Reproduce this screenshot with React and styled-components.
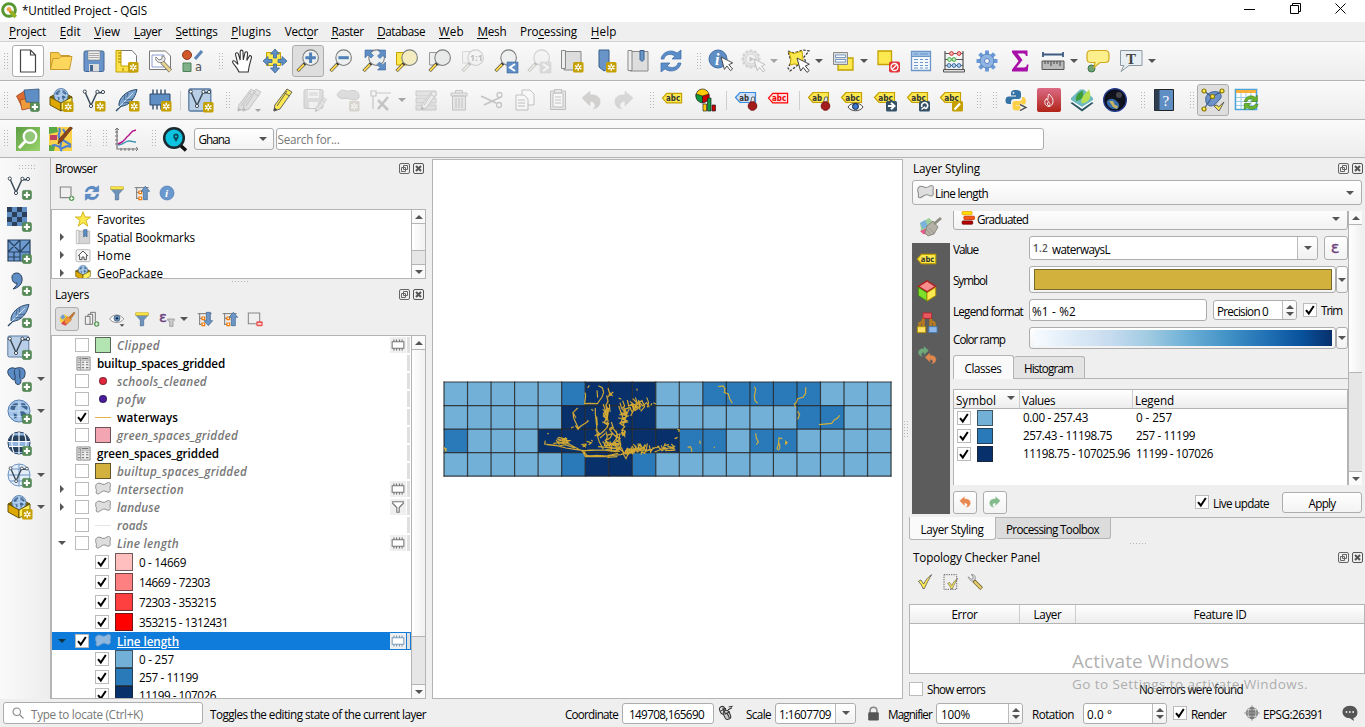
import React, { useLayoutEffect, useRef, useState } from 'react';
import styled, { createGlobalStyle, css } from 'styled-components';

const FONT = '"Open Sans", "Noto Sans", sans-serif';
const LINE = '#b4b4b4';

const Global = createGlobalStyle`
  *, *::before, *::after { box-sizing: border-box; }
  body { margin: 0; overflow: hidden; background: #efefef; font: 11.7px/16px ${FONT}; color: #000; }
`;

/* ---------- text ---------- */

const Label = styled.span`
  display: block;
  flex: none;
  white-space: nowrap;
  width: ${p => (p.$w ? `${p.$w}px` : 'auto')};
  margin-left: ${p => p.$ml || 0}px;
  margin-top: ${p => p.$mt || 0}px;
  color: ${p => p.$color || 'inherit'};
  font-size: ${p => p.$size || 11.7}px;
  font-weight: ${p => (p.$bold ? 600 : 400)};
  font-style: ${p => (p.$italic ? 'italic' : 'normal')};
  text-decoration: ${p => (p.$underline ? 'underline' : 'none')};
  text-underline-offset: 1px;
`;

const Mnemonic = styled.span`
  border-bottom: 1px solid currentColor;
  display: inline-block;
  line-height: 13px;
`;

/* Tracks its characters so that the label takes exactly `w` pixels. */
function T({ w, children, ...rest }) {
  const ref = useRef(null);
  const [spacing, setSpacing] = useState(0);
  const text = String(children);
  const at = text.indexOf('&');
  const plain = text.replace('&', '');
  useLayoutEffect(() => {
    if (!w || !ref.current) return;
    const range = document.createRange();
    range.selectNodeContents(ref.current);
    setSpacing((w - range.getBoundingClientRect().width) / plain.length);
  }, []);
  return (
    <Label ref={ref} $w={w} style={{ letterSpacing: spacing }} {...rest}>
      {at < 0 ? plain : <>{plain.slice(0, at)}<Mnemonic>{plain[at]}</Mnemonic>{plain.slice(at + 1)}</>}
    </Label>
  );
}

/* ---------- icons ---------- */

const Glyph = styled.svg.attrs({ viewBox: '0 0 24 24' })`
  width: ${p => p.$s || 24}px;
  height: ${p => p.$s || 24}px;
  flex: none;
  display: block;
  overflow: visible;
  ${p => p.$off && css`opacity: 0.32; filter: grayscale(0.85);`}
`;

const StarBadge = ({ x = 13, y = 13 }) => (
  <g transform={`translate(${x} ${y})`}>
    <rect width="10.5" height="10.5" rx="1.6" fill="#c4a000" stroke="none" />
    <path d="M5.25 1.8v7M2 3.6l6.5 3.5M2 7.1l6.5-3.5" stroke="#fff" strokeWidth="1.5" />
    <circle cx="5.25" cy="5.3" r="1" fill="#c4a000" stroke="none" />
  </g>
);
const PlusBadge = ({ x = 14, y = 14 }) => (
  <g transform={`translate(${x} ${y})`}>
    <rect x=".4" y=".4" width="9" height="9" rx="1.6" fill="#5a8c5a" stroke="#3f7a46" strokeWidth=".6" />
    <path d="M4.9 1.8v6.2M1.8 4.9H8" stroke="#fff" strokeWidth="2" />
  </g>
);
const Lens = ({ fill = '#eef0f0', children }) => (
  <>
    <path d="M9.3 14.2L1.6 22" stroke="#333" strokeWidth="3.2" />
    <path d="M8 15.5L1.9 21.7" stroke="#fcd94f" strokeWidth="2" />
    <circle cx="14.6" cy="8.7" r="7.8" fill={fill} stroke="#7d7d7d" strokeWidth="1.1" />
    {children}
  </>
);
const Tag = ({ fill = '#fce94f', stroke = '#c4a000', color = '#333', label = 'abc', y = 0 }) => (
  <g transform={`translate(0 ${y})`}>
    <path d="M1.5 9.5L6 4.5h15.5v10H6z" fill={fill} stroke={stroke} strokeWidth="1.2" />
    <text x="5.3" y="12.6" fontSize="8.6" fontWeight="700" fontFamily="DejaVu Sans, sans-serif" fill={color} textLength={label.length * 4.9} lengthAdjust="spacingAndGlyphs">{label}</text>
  </g>
);
const Cursor = ({ x = 11, y = 8, s = 1 }) => (
  <path transform={`translate(${x} ${y}) scale(${s})`} d="M0 0l3.6 13 2.6-3.6 3.8 5 2.2-1.8-3.9-4.6 4-1.8z" fill="#fff" stroke="#444" />
);
const VLine = ({ s = '#3d4a57' }) => (
  <g fill="none" stroke={s} strokeWidth="1.5">
    <path d="M3 4l6 13.5 6-13 5 .3" />
    <g fill="#fff" strokeWidth="1"><circle cx="2.8" cy="3.6" r="1.6" /><circle cx="9" cy="18" r="1.6" /><circle cx="15.4" cy="3.8" r="1.6" /><circle cx="21" cy="4" r="1.6" /></g>
  </g>
);
const Globe = ({ cx = 12, cy = 12, r = 10 }) => (
  <g>
    <circle cx={cx} cy={cy} r={r} fill="#a3c4e8" stroke="#5a7fae" />
    <g transform={`translate(${cx} ${cy}) scale(${r / 10})`} fill="#3f6690">
      <path d="M-7-5l3-2 3 0 0 2-2 1-1 3-2 0-2-1zM2-7l3 0 3 4-1 2-3-2-2-1zM1 0l3 0 3 3-2 1-2 4-1-3zM-5 2l3 1 0 3-2 1z" />
      <path d="M-9.5 0h19M-8 5h16M-8-5h16M0-9.5v19" stroke="#d6e6f6" strokeWidth=".5" />
    </g>
  </g>
);
const GeoBox = ({ lower = true }) => (
  <g stroke="#5c4b00" strokeWidth=".9">
    <path d="M1 9l11-6 11 6-11 5z" fill="#7a6300" />
    <g stroke="none"><Globe cx={12} cy={7.5} r={7} /></g>
    <path d="M1 9l11 6v8L1 17z" fill="#dda900" />
    <path d="M23 9l-11 6v8l11-6z" fill={lower ? '#ffef5c' : '#e8c600'} />
  </g>
);
const Feather = () => (
  <g>
    <path d="M1 23L20 4" stroke="#2c4c6b" strokeWidth="1.4" />
    <path d="M4 18C3 10 12 2 22 1.500 20 10 15 18 4.500 18.500z" fill="#7ba2cf" stroke="#2c4c6b" />
    <path d="M3 20L18 5" stroke="#dbe8f5" strokeWidth=".9" />
    <path d="M9 12l1-5M12 9l1-4M11 12l7-1M8 15l7-1" stroke="#2c4c6b" strokeWidth=".7" fill="none" />
  </g>
);
const Pencil = ({ fill = '#fce94f' }) => (
  <g stroke="#555" strokeWidth=".9" strokeLinejoin="round">
    <path d="M17 1l5 3L10 21l-6 2 .8-6z" fill={fill} />
    <path d="M14.500 5l5 3M17 3L7 18" fill="none" /><path d="M4 23l.5-3 2.300 1.700z" fill="#444" />
  </g>
);
const Refresh = () => (
  <g fill="#5b8dc9" stroke="#3f6ea8" strokeWidth=".7">
    <path d="M2 10C3 3 12-.5 18 4l4-3v9h-9l3-3C11 4 6 5.500 5 10z" />
    <path d="M22 14c-1 7-10 10.500-16 6l-4 3v-9h9l-3 3c5 3 10 1.500 11-3z" />
  </g>
);
const Funnel = () => (
  <g><path d="M3 4h18v2.500l-6.500 7V22l-5 .500v-9L3 6.500z" fill="#6e93bd" stroke="#456a94" /><path d="M2.500 2.500h19v4h-19z" fill="#fce94f" stroke="#c4a000" strokeWidth=".8" /></g>
);
const TreeArrow = ({ up }) => (
  <g>
    <path d="M1 4h21M4 4v17M4 11h5M4 20h5" stroke="#777" fill="none" strokeWidth="1.500" />
    <path d="M7.500 9h4v4h-4zM7.500 18h4v4h-4z" fill="#fff" stroke="#f57900" strokeWidth="1.800" />
    <path transform={up ? '' : 'rotate(180 17 12)'} d="M17 2l6.500 7.500H20V22h-6V9.500h-3.500z" fill="#6e97c7" stroke="#37608c" />
  </g>
);
const Chip = ({ c = '#777', fill = '#fff' }) => (
  <g stroke={c}><path d="M2 6.500h20v11H2z" fill={fill} strokeWidth="1.800" /><path d="M5 6.500V2.500M9.500 6.500V2.500M14.500 6.500V2.500M19 6.500V2.500M5 17.500v4M9.500 17.500v4M14.500 17.500v4M19 17.500v4" strokeWidth="2" /></g>
);
const Poly = ({ fill = '#dedede', stroke = '#8c8c8c' }) => (
  <path d="M1 8c0-4 4-6 8-4s6 1 9-1 6 0 5 4 0 5 0 7-3 4-6 2-5-1-8 1-6 4-7 1 1-3 0-5-1-2-1-5z" fill={fill} stroke={stroke} strokeWidth="1.500" />
);
const Undo = ({ fill = '#c9653b', flip }) => (
  <path transform={flip ? 'translate(24 0) scale(-1 1)' : ''} d="M3 10l8-7v4c7-1 11 3 10 8-1 4-3 5-7 6 2-2 3-4 1-6-1-1-2-2-4-1v4z" fill={fill} stroke={fill} strokeWidth=".6" opacity=".95" />
);
const Check = () => <path d="M2 11l4-2 4 6C13 9 17 4 22 1 18 7 14 15 11 22H9C8 18 5 14 2 11z" fill="#fce94f" stroke="#555" strokeWidth="1.200" />;

const ICONS = {
  newFile: <path d="M4.500 1h10l5 5v17h-15zM14.500 1v5h5" fill="#fff" stroke="#444" strokeWidth="1.200" />,
  open: <g fill="#f7c948" stroke="#c99a2e"><path d="M1.500 20V3.500h8l2 3h9V20z" /><path d="M1.500 20.500L4 9.500h6l2-2h11l-2.500 13z" fill="#fdd65c" /></g>,
  save: <g><rect x="2" y="2" width="20" height="20.500" rx="1.500" fill="#6894cb" stroke="#44668f" /><path d="M6 2h12v9H6z" fill="#eee" stroke="#777" strokeWidth=".6" /><path d="M7 4.500h10M7 6.500h10M7 8.500h10" stroke="#999" strokeWidth=".8" /><path d="M7 15h10v7.500H7z" fill="#ddd" /><path d="M8 16h3v6H8z" fill="#44668f" /></g>,
  layout: <g><path d="M5 1.500h12l4.500 5V21H5z" fill="#fff" stroke="#777" /><path d="M1 1.500h5V17h14v6H1z" fill="#fce24a" stroke="#c4a000" /><path d="M3 4h3M3 7h3M3 10h3M3 13h3M8 19v3" stroke="#9b7d00" /><StarBadge /></g>,
  layoutMgr: <g><path d="M1.500 2h16l5 5v13.500h-21z" fill="#fff" stroke="#777" /><path d="M4 6h12v12H4z" fill="none" stroke="#6d87c5" strokeWidth=".8" /><path d="M14 13l8.500 9" stroke="#777" strokeWidth="4.500" /><path d="M14 13l8.300 8.700" stroke="#e8d48c" strokeWidth="2.800" /><path d="M8 8l3 3 3-1 0-3c3 0 4 3 2 5s-4 2-6 1-3-3-2-5z" fill="#eee" stroke="#777" strokeWidth=".9" /></g>,
  styleMgr: <g><circle cx="6" cy="6" r="4.500" fill="#d0582b" stroke="#8c3b1d" /><path d="M14 10l7-8" stroke="#5c86b8" strokeWidth="3.200" /><path d="M2 14h8v8.500H2z" fill="#7fb08a" stroke="#4c8259" /><text x="14" y="22" fontSize="11.5" fontFamily="DejaVu Sans, sans-serif" fill="#555">a</text></g>,
  pan: <path d="M9 23c-1.500-4-5-7-6.300-9.500-.600-2 1.600-2.500 3-.5L8 15.500 5.500 5.500c-.3-2 2.200-2.500 2.800-.6L10.200 11V2.800c0-2.200 2.600-2.200 2.800 0L13.300 11l1.600-7c.5-2 2.900-1.400 2.700.7L16.800 11.500 19 7.500c.7-1.700 3-.8 2.500.9l-2.300 8.600-1 6z" fill="#fff" stroke="#333" strokeWidth="1.100" />,
  panSel: <g><path d="M3.500 3.500h14v13h-14z" fill="#fce94f" stroke="#c4a000" /><g fill="#5f8ec4" stroke="#3a659b" strokeWidth=".8"><path d="M12 0l4.500 5h-3v4h-3V5h-3zM12 24l4.500-5h-3v-4h-3v4h-3zM0 12l5-4.500v3h4v3H5v3zM24 12l-5-4.500v3h-4v3h4v3z" /></g></g>,
  zoomIn: <Lens><path d="M14.600 3.500v10.400M9.400 8.700h10.400" stroke="#4f80b8" strokeWidth="3" /></Lens>,
  zoomOut: <Lens><path d="M9.400 8.700h10.400" stroke="#4f80b8" strokeWidth="3" /></Lens>,
  zoomFull: <g><Lens /><g fill="#5f8ec4" stroke="#3a659b" strokeWidth=".6"><path d="M3 1h8L8.500 3.500l3 3-2.500 2.500-3-3L3 9zM23.500 1v8L21 6.500l-3 3L15.500 7l3-3L16 1zM23.500 21h-8l2.500-2.500-3-3 2.500-2.500 3 3 3-3z" /></g></g>,
  zoomSel: <g><path d="M1.500 3.500h11V16h-11z" fill="#fce94f" stroke="#c4a000" /><Lens fill="#f2ecc0" /></g>,
  zoomLayer: <g><path d="M1.500 3.500h11V16h-11z" fill="#eee" stroke="#999" /><Lens fill="#e8eaea" /></g>,
  zoomNative: <g><path d="M1.500 2.500h11V14h-11z" fill="#eee" stroke="#999" /><Lens><text x="9" y="12" fontSize="9" fontWeight="700" fontFamily="Open Sans, sans-serif" fill="#444">1:1</text></Lens></g>,
  zoomLast: <g><Lens /><path d="M13 13h11v11H13z" fill="#5f8ec4" stroke="#3a659b" strokeWidth=".6" /><path d="M21 15l-5 3.500 5 3.500" fill="none" stroke="#fff" strokeWidth="2" /></g>,
  zoomNext: <g><Lens /><path d="M13 13h11v11H13z" fill="#aaa" stroke="#999" strokeWidth=".6" /><path d="M16 15l5 3.500-5 3.500" fill="none" stroke="#fff" strokeWidth="2" /></g>,
  newView: <g fill="#ddd" stroke="#888"><path d="M4 2.500h17v18.500H4z" /><path d="M1.500 1.500h4v18h-4z" fill="#eee" /><StarBadge /></g>,
  newMark: <g><path d="M6 1h10v18l-5 3-5-4z" fill="#6894c8" stroke="#3a5f8b" /><StarBadge /></g>,
  marks: <g fill="#ddd" stroke="#888"><path d="M4 2.500h18V22H4z" /><path d="M2 1.500h4v20H2z" fill="#eee" /><path d="M14 1.500h4v9l-2 2-2-2z" fill="#6894c8" stroke="#3a5f8b" /></g>,
  refresh: <Refresh />,
  identify: <g><circle cx="10" cy="10" r="9" fill="#5f8ec4" stroke="#3f6ea8" /><text x="7" y="15.500" fontSize="16" fontStyle="italic" fontWeight="700" fontFamily="Liberation Serif, serif" fill="#fff">i</text><Cursor x={13} y={8} s={0.95} /></g>,
  action: <g><g stroke="#999" strokeWidth="3">{[0, 30, 60, 90, 120, 150].map(a => <path key={a} d="M10 .5v19" transform={`rotate(${a} 10 10)`} />)}</g><circle cx="10" cy="10" r="7.500" fill="#ccc" stroke="#888" /><circle cx="10" cy="10" r="5" fill="#eee" stroke="#888" /><path d="M8.500 7.500l4.500 2.500-4.500 3z" fill="#666" /><Cursor x={13} y={10} s={0.9} /></g>,
  select: <g><path d="M2 2l6 2 9-3 6 1-5 6 3 9-9-1-8 6-2-3 3-6z" fill="none" stroke="#333" strokeDasharray="2.500 1.500" strokeWidth="1.200" /><path d="M3 3l5 1.500L16 2l1 8-1 6-8-1-4 1 1-6z" fill="#fce94f" stroke="#c4a000" /><Cursor x={11} y={9} s={1} /></g>,
  selectVal: <g><path d="M7 9h15v12H7z" fill="#fce94f" stroke="#c4a000" strokeWidth="1.300" /><path d="M2.500 3.500h14v12h-14z" fill="#ddd" stroke="#8a8a8a" /><path d="M4.500 6h10v2.500h-10zM4.500 10.500h10V13h-10z" fill="#fff" stroke="#5c86b8" strokeWidth=".8" /></g>,
  deselect: <g><path d="M2 2h13.500v13.500H2z" fill="#fce94f" stroke="#c4a000" strokeWidth="1.300" /><rect x="13" y="12.500" width="11" height="11" rx="2" fill="#e0353a" /><circle cx="18.500" cy="18" r="3.500" fill="none" stroke="#fff" strokeWidth="1.300" /><path d="M16 20.500l5-5" stroke="#fff" strokeWidth="1.300" /></g>,
  table: <g><path d="M2.500 2.500h19v19h-19z" fill="#f3f8fd" stroke="#6d96c8" strokeWidth="1.300" /><path d="M3 3h18v4.500H3z" fill="#9dbfe4" /><path d="M2.500 7.500h19M5 5h4M11 5h8M5 10.500h4M11 10.500h3M16 10.500h3M5 13.500h4M11 13.500h3M16 13.500h3M5 16.500h4M11 16.500h3M16 16.500h3M5 19h4M11 19h3M16 19h3" stroke="#6d96c8" strokeWidth="1.100" /></g>,
  abacus: <g fill="none" stroke="#555"><path d="M3 2v19M21 2v19M3 4.500h18M3 10.500h18M3 16.500h18" strokeWidth="1.200" /><path d="M1.500 20.500h21v2.500h-21z" fill="#ddd" /><g stroke="#c33" fill="#f6b4b4"><circle cx="9.500" cy="4.500" r="1.900" /><circle cx="17" cy="4.500" r="1.900" /></g><g stroke="#4a4" fill="#c8ecc8"><circle cx="7.500" cy="10.500" r="1.900" /><circle cx="12" cy="10.500" r="1.900" /></g><g stroke="#3a6ea5" fill="#b4d2ee"><circle cx="7" cy="16.500" r="1.900" /><circle cx="12" cy="16.500" r="1.900" /><circle cx="17" cy="16.500" r="1.900" /></g></g>,
  gear: <g><g stroke="#6b9ad4" strokeWidth="4">{[0, 45, 90, 135].map(a => <path key={a} d="M12 1.500v21" transform={`rotate(${a} 12 12)`} />)}</g><circle cx="12" cy="12" r="7" fill="#8fb4e3" stroke="#5585c2" /><circle cx="12" cy="12" r="2.500" fill="#f4f4f4" stroke="#5585c2" /></g>,
  sigma: <path d="M4 1.500h15.500V7h-1.500c-.5-2-1.500-2.500-3-2.500H9.500l5 6.500-6 7.500H16c2 0 2.500-1 3-3h1.500l-.8 7H4v-2l6.500-8.500L4 3.500z" fill="#a80fa8" />,
  ruler: <g><path d="M2 5.500h20M2 3v5M22 3v5" stroke="#3d5a80" strokeWidth="1.800" /><path d="M1 12h22v8.500H1z" fill="#bbb" stroke="#555" /><path d="M4 12v3M7 12v3M10 12v5M13 12v3M16 12v3M19 12v5" stroke="#444" /></g>,
  tips: <g><circle cx="5.500" cy="19.500" r="3.500" fill="#6da377" stroke="#3f7048" /><path d="M5 1.500h14c3 0 4 1.500 4 4v4c0 3-1 4-4 4h-5l-6 5 1-5H5c-3 0-4-1-4-4v-4c0-2.500 1-4 4-4z" fill="#fdf08c" stroke="#cfa91c" strokeWidth="1.200" /></g>,
  annot: <g><path d="M1.500 1.500h21.500v15H10L2 22.500l3-6H1.500z" fill="#e8eff3" stroke="#8d9aa3" /><text x="7" y="14.500" fontSize="15" fontWeight="700" fontFamily="Liberation Serif, serif" fill="#444">T</text></g>,

  dsm: <g strokeWidth=".8"><path d="M.5 8l8-5 6 11-8 6z" fill="#dd6b2f" stroke="#a1461b" /><path d="M4 12l13-3 2 10-13 3z" fill="#ef9b3c" stroke="#a1461b" /><path d="M8 2l15-1v14l-13-1z" fill="#5f8ec4" stroke="#33557f" /><PlusBadge /></g>,
  geopkg: <g><GeoBox /><StarBadge x={14} y={13.500} /></g>,
  newShp: <g><VLine /><StarBadge /></g>,
  newSpatialite: <g><Feather /><StarBadge x={14} /></g>,
  newMem: <g><path d="M2 6h20v11H2z" fill="#5f8ec4" stroke="#2f4d6e" /><path d="M5 6V1.500M9 6V1.500M13 6V1.500M17 6V1.500M5 17v4.500M9 17v4.500M13 17v4.500" stroke="#2f4d6e" strokeWidth="1.400" /><StarBadge /></g>,
  newVirt: <g><rect x=".8" y="1" width="22" height="22" rx="1.500" fill="#b9cfe8" stroke="#5a7ba1" strokeWidth="1.300" /><VLine /><StarBadge x={15} y={14} /></g>,
  edits: <g><g transform="translate(-3 0)"><Pencil fill="#bbb" /></g><g transform="translate(2 0)"><Pencil fill="#bbb" /></g><path d="M18 21h6l-3 3z" fill="#000" /></g>,
  pencil: <Pencil />,
  saveEdits: <g><rect x="1" y="1.500" width="19" height="19" rx="1.500" fill="#aaa" stroke="#777" /><path d="M5 2h11v8H5z" fill="#eee" /><path d="M6 5h9M6 7h9" stroke="#888" /><path d="M6 14h9v6H6z" fill="#eee" /><g transform="translate(10 9) scale(.62)"><Pencil fill="#ccc" /></g></g>,
  addPoly: <g><path d="M3 4c4-4 6 0 10-1s9-1 10 4-5 6-9 4-7 1-10-1-4-3-1-6z" fill="#aaa" stroke="#777" /><StarBadge /></g>,
  vertex: <g stroke="#666" fill="none" strokeWidth="1.200"><path d="M2 3h5v5H2zM7 5h15M4 8v13" /><path d="M9 12l10 10M19 9L9 21" strokeWidth="2.600" /></g>,
  modify: <g fill="#bbb" stroke="#777"><path d="M2 3h20v5H2zM2 10h20v5H2zM2 17h20v5H2z" /><g transform="translate(4 2) scale(.85)"><Pencil fill="#ddd" /></g></g>,
  trash: <g fill="#ccc" stroke="#8a5555"><path d="M4 5h16v3H4zM8.500 5V2.500h7V5M5.500 8h13v14h-13z" /><path d="M9 10v10M12 10v10M15 10v10" /></g>,
  cut: <g fill="none" stroke="#666" strokeWidth="1.300"><path d="M1 8l15 7M4 17l17-8" strokeWidth="1.800" /><circle cx="19.500" cy="7" r="2.500" /><circle cx="19" cy="17" r="2.500" /></g>,
  copy: <g fill="#fff" stroke="#555"><path d="M9 2h8l4 4v11H9z" /><path d="M3 7h8l4 4v11H3z" /><path d="M5 12h7M5 15h7M5 18h7" /></g>,
  paste: <g fill="#ccc" stroke="#555"><path d="M4.500 3h15v18.500h-15z" /><path d="M7 5h10v14H7z" fill="#fff" /><path d="M8.500 1.500h7V5h-7z" /><path d="M9 9h6M9 12h6M9 15h6" /></g>,
  undo: <Undo fill="#a87a66" />,
  redo: <Undo fill="#7f9c84" flip />,
  tag: <Tag />,
  tagMid: <Tag y={2.5} />,
  diagram: <g strokeWidth=".7" stroke="#222"><circle cx="8.500" cy="7.500" r="6.500" fill="#fc0" /><path d="M8.500 8L2 6c-.5 5 1.500 8 6.500 9z" fill="#0a9a3c" /><path d="M8.500 8L15 6c1 5-1.500 8-6.500 9z" fill="#c00" /><path d="M9 16h3.500v7H9z" fill="#fc0" /><path d="M13.500 10H17v13h-3.500z" fill="#0a9a3c" /><path d="M18 17h3.500v6H18z" fill="#c00" /></g>,
  tagPin: <g><Tag fill="#cfe2fa" stroke="#3c8ae0" label="ab" /><path d="M16 16l2-7 2.500 0-.5 8" fill="#eee" stroke="#666" /><circle cx="18.500" cy="18" r="4.300" fill="#a41d1d" stroke="#711" /></g>,
  tagRed: <Tag fill="#fdd" stroke="#f00" color="#e00" />,
  tagPin2: <g><Tag label="ab" /><path d="M16 16l2-7 2.500 0-.5 8" fill="#eee" stroke="#666" /><circle cx="18.500" cy="18" r="4.300" fill="#a41d1d" stroke="#711" /></g>,
  tagEye: <g><Tag /><path d="M8 19c3-5 12-5 15 0-3 5-12 5-15 0z" fill="#fff" stroke="#444" /><circle cx="15.500" cy="18.500" r="3" fill="#3c78c8" stroke="#124" /></g>,
  tagMove: <g><Tag /><rect x="13" y="13" width="11" height="10.500" rx="1.500" fill="#355266" /><path d="M15 18h5M18 14.800l3.500 3.200-3.500 3.300" stroke="#fff" strokeWidth="2" fill="none" /></g>,
  tagRot: <g><Tag /><rect x="13" y="13" width="11" height="10.500" rx="1.500" fill="#355266" /><path d="M18 19.500l-2.500 2M16 19a3 3 0 1 1 5 .5c-1 1.500-2.500 1-2.500-1" stroke="#fff" strokeWidth="1.500" fill="none" /></g>,
  tagEdit: <g><Tag /><rect x="13" y="13" width="11" height="10.500" rx="1.500" fill="#c4a000" /><path d="M15.500 21.500l5.500-6" stroke="#fff" strokeWidth="2.200" /></g>,
  python: <g><path d="M11.500 2C8 2 7 3.500 7 5V7.500h5v1H5C2.500 8.500 1.500 10 1.500 12.500S2.500 16 5 16h2v-2c0-2 1.500-3 3-3h4.500c1.500 0 2.500-1 2.500-2.500V5C17 3 15 2 11.500 2z" fill="#3572a5" /><path d="M12.500 22.500c4 0 4-1.500 4-3V17.500h-4.500V17h7c2 0 3-2 3-4s-1-4-3-4h-1v1.500c0 2-1 2.500-2.500 2.500H11c-1.500 0-2.500 1-2.500 2.500v3.500c0 2.500 1 3.500 4 3.500z" fill="#fcd046" /><circle cx="9.500" cy="4.800" r=".9" fill="#fff" /><path d="M16 16.500l6 3-6 3.200" fill="none" stroke="#fff" strokeWidth="3" /><path d="M16 16.500l6 3-6 3.200" fill="none" stroke="#555" strokeWidth="1.500" /></g>,
  fire: <g><defs><linearGradient id="fr" x1="0" y1="0" x2="0" y2="1"><stop offset="0" stopColor="#dc6b85" /><stop offset="1" stopColor="#b02318" /></linearGradient></defs><rect width="24" height="24" rx="2" fill="url(#fr)" /><path d="M12 6c2.500 2.500 4.500 5 4 8S13.500 18.500 12 18.500s-4-1-4.200-4C7.700 12.500 8.500 11.500 9.500 10.500c0 1 .2 1.800 1 1.800 1-1.800 0-4.300 1.500-6.300zM12 18c-2-1-2-2.500-.5-4.500 1 2 2.500 2.500.5 4.500z" fill="none" stroke="#fff" strokeWidth=".9" /></g>,
  leaf: <g><path d="M12 9l11.500 6L12 23.500 .5 15z" fill="#2b5560" /><path d="M12 6l11.500 7L12 21 .5 13z" fill="#fff" /><path d="M10 1.500h4l9 8.500v2L12 19 1 12v-2z" fill="#6fbac0" /><path d="M6 13C5 7 9 4 12.500 2.500c2 5 0 10-6.500 10.500z" fill="#3f9e3c" /><path d="M11.500 15.500c-1-6 3-9 7.500-14 3 7 1 13-7.500 14z" fill="#b6e04f" /></g>,
  earth: <g><circle cx="12" cy="12" r="11.300" fill="#0b0d1c" stroke="#263a8a" strokeWidth="1.400" /><circle cx="12" cy="12" r="9.300" fill="#10131c" /><path d="M3.500 14c3-5 8-4 12 1 1 2 1 4-1 6-6 1-10-2-11-7z" fill="#3569a8" /><path d="M6 13l4 0 2 4 3 1-1 3-4-2z" fill="#c2b366" /><circle cx="16" cy="7" r="3" fill="#777" opacity=".5" /></g>,
  help: <g><path d="M2.500 1.500h19v21h-19z" fill="#5f8ec4" stroke="#222" /><path d="M2.500 1.500h5v21h-5z" fill="#2c3e50" /><text x="10.500" y="17.500" fontSize="15" fontFamily="Liberation Serif, serif" fill="#fff">?</text></g>,
  topo: <g><path d="M5 9c2-5 8-6 12-5 4 2 4 6 1 8-3 3-3 5-8 6-4 0-6-4-5-9z" fill="#6d93c9" stroke="#3b5d8f" /><g stroke="#3b5d8f" strokeWidth="1.200"><path d="M3 3l8 6M21 3l-10 6M3 21l8-12" fill="none" /><g fill="#fce94f" stroke="#8c7800"><circle cx="3" cy="3" r="2" /><circle cx="21" cy="3" r="2" /><circle cx="11.500" cy="8.500" r="2" /><circle cx="3" cy="21" r="2" /></g></g><path d="M13 18l3-1 1.500 2L23 14l-5 9z" fill="#fce94f" stroke="#555" strokeWidth=".9" /></g>,
  sync: <g><path d="M1.500 1.500h21v20h-21z" fill="#fff" stroke="#4ba3d8" strokeWidth="1.600" /><path d="M2 2h20v3H2z" fill="#f5b13c" /><path d="M7 5v16M12 5v16M17 5v16M2 9.500h20M2 13.500h20M2 17.500h20" stroke="#9ccbe8" /><g transform="translate(9 6) scale(.68)" fill="#6ab82e" stroke="#3d7d12"><path d="M2 11C3 4 12 0 18 5l3-3v9h-9l3-3c-5-2-9 0-9 3zM22 15c-1 7-10 10-16 5l-4 3v-9h9l-3 3c5 3 9 1 10-2z" /></g></g>,
  osmFind: <g><defs><linearGradient id="og" x1="0" y1="0" x2="1" y2="1"><stop offset="0" stopColor="#5c9e44" /><stop offset="1" stopColor="#9ad46b" /></linearGradient></defs><path d="M0 0h24v24H0z" fill="url(#og)" /><circle cx="14" cy="9.500" r="6.300" fill="#92c678" stroke="#fff" strokeWidth="2.200" /><path d="M9.500 14L3 21" stroke="#fff" strokeWidth="3" /></g>,
  osm: <g><path d="M0 0h23v24H0z" fill="#fbd24a" /><path d="M0 0h8l1 5-9 2zM0 18l6 1-1 5H0z" fill="#5aa845" /><path d="M1 8h7v5H1z" fill="#c04060" /><path d="M10 1c3 4-3 7 1 11s-3 7 2 12M14 2l3 5M3 19c4-3 7 2 10 2s4-4 9-1M12 12l10 6" fill="none" stroke="#4f83d1" strokeWidth="2.200" /><path d="M23.500 1L13 14l-4 3 1-5L21 0z" fill="#8a4520" stroke="#5d2c12" strokeWidth=".7" /></g>,
  profile: <g><path d="M3 2v20h20" fill="none" stroke="#777" strokeWidth="1.200" /><path d="M1 5h3M1 9h3M1 13h3M1 17h3M7 21v3M11 21v3M15 21v3M19 21v3M1 3l2-2 2 2M22 20l2 2-2 2" stroke="#777" fill="none" /><path d="M4 18c8-1 6-4 11-4s3 1 7 1" stroke="#3c96b4" fill="none" strokeWidth="1.300" /><path d="M4 17c7-2 7-6 10-8s2-5 8-6" stroke="#b8148c" fill="none" strokeWidth="1.500" /></g>,
  geocode: <g><path d="M17 18l6 5.500" stroke="#111" strokeWidth="3.500" /><circle cx="11" cy="11" r="9.800" fill="#0cc4e0" stroke="#1b2a30" strokeWidth="2.500" /><path d="M13 6.500c3 0 3.200 3 2 5L13 15l-2-3.500c-1.200-2-1-5 2-5z" fill="#0b4a5c" /><circle cx="13" cy="9.500" r="1.100" fill="#0cc4e0" /></g>,

  addVector: <g><VLine /><PlusBadge x={15} y={15} /></g>,
  addRaster: <g><path d="M0 0h20v19H0z" fill="#5f8ec4" /><path d="M0 0h5v5H0zM10 0h5v5h-5zM5 5h5v5H5zM0 10h5v5H0zM15 5h5v5h-5zM10 10h5v5h-5zM5 15h5v4H5z" fill="#2b3f58" /><PlusBadge x={15} y={15} /></g>,
  addMesh: <g fill="#6d9ad0" stroke="#27405e" strokeWidth="1.200"><path d="M1 1h22v21H1zM1 13h22M13 1v21M1 1l12 12M13 1L1 13M23 2L13 13M7 13v9M1 18h12" /><PlusBadge x={15} y={15} /></g>,
  addCsv: <g><path d="M5 6c0-5 9-6 10 1 1 6-4 10-9 11 3-3 4-4 4-6-3 1-5-2-5-6z" fill="#5f8ec4" stroke="#27405e" /><PlusBadge x={15} y={15} /></g>,
  addSpatialite: <g><Feather /><PlusBadge x={15} y={15} /></g>,
  addVirt: <g><rect x=".8" y="1" width="21" height="21" rx="1.500" fill="#b9cfe8" stroke="#5a7ba1" /><VLine /><PlusBadge x={15} y={15} /></g>,
  addPg: <g><path d="M2 2c3-2 5-1 6-.5 3-1 6-1.200 8 0s3 5 1 9c-.5 1-1.500 1.500-2 1l-1 1c0 4-1 5-3 5s-3-2-3-5c-2 1-4-1-4-2C2 9-1 5 2 2z" fill="#5b8bc4" stroke="#27405e" /><path d="M8 2.500c-2 3 1 6 0 9.500M12 2.500c2 3 0 5 1 9" fill="none" stroke="#27405e" /><PlusBadge x={15} y={15} /></g>,
  addWms: <g><Globe cx={12} cy={12} r={11} /><PlusBadge x={15} y={15} /></g>,
  addWcs: <g><circle cx="12" cy="12" r="11" fill="#8fb5e0" stroke="#27405e" /><path d="M4 4.500h16l3 6H1zM1.500 15h21l-4 6h-13z" fill="#27405e" /><path d="M1 10.500h22M2 15.500h20M12 1v22M7 2c-3 7-3 13 0 20M17 2c3 7 3 13 0 20" fill="none" stroke="#fff" strokeWidth="1.100" /><PlusBadge x={15} y={15} /></g>,
  addWfs: <g><circle cx="12" cy="12" r="11" fill="#e4eef8" stroke="#6d94c4" /><path d="M1 12h22M3 6h18M3 18h18M12 1v22" stroke="#6d94c4" /><g transform="translate(1 2) scale(.9)"><VLine /></g><PlusBadge x={15} y={15} /></g>,
  addGpkg: <g><GeoBox /><StarBadge x={15} y={14} /></g>,

  addLayer: <g><path d="M2 3h16v16H2z" fill="none" stroke="#888" strokeWidth="1.700" /><circle cx="19" cy="20" r="4" fill="#5a9a5a" /><path d="M19 17.500v5M16.500 20h5" stroke="#fff" strokeWidth="1.500" /></g>,
  funnel: <Funnel />,
  collapse: <TreeArrow up />,
  expand: <TreeArrow />,
  info: <g><circle cx="12" cy="12" r="10.500" fill="#6b98cf" stroke="#4776ad" /><text x="9" y="18.500" fontSize="17" fontStyle="italic" fontWeight="700" fontFamily="Liberation Serif, serif" fill="#fff">i</text></g>,
  star: <path d="M12 1l3 8h8.500l-7 5.300 2.700 8.500-7.200-5.300-7.200 5.300 2.700-8.500-7-5.300H9z" fill="#fcea50" stroke="#c9a800" strokeWidth="1.200" />,
  bookmark: <g fill="#d5d5d5" stroke="#aaa"><path d="M4 3h18v19H4z" /><path d="M2 2h4v20H2z" fill="#eee" /><path d="M13 1h5v11l-2.500-2L13 12z" fill="#5f8ec4" stroke="#3a5f8b" /></g>,
  home: <g><rect x="1.500" y="4" width="21" height="18" rx="2" fill="#f4f4f4" stroke="#999" /><path d="M5 13l7-7 7 7h-2v6h-3.500v-4h-3v4H7v-6z" fill="#fff" stroke="#444" strokeWidth="1.400" /></g>,
  geobox: <GeoBox />,
  brush: <g><path d="M1 10l8-5 6 5-5 9-8-2z" fill="#f7d23e" /><path d="M2 9l4-4 4 4-5 4z" fill="#6f9cd0" /><path d="M3 19l5-5 6 3-4 5z" fill="#e0454e" /><path d="M14 10l3 3 7-10-1.500-1.500z" fill="#c57b36" stroke="#8a5222" strokeWidth=".6" /><path d="M8 13l5-5 6 5-6 6-4 0z" fill="#f0963c" stroke="#b5651d" strokeWidth=".6" /></g>,
  group: <g fill="none" stroke="#666" strokeWidth="1.300"><path d="M2 8h7v12H2zM6 8V5h7v15H9M10 5V2h7v14" /><circle cx="19" cy="19.500" r="4" fill="#5a9a5a" stroke="none" /><path d="M19 17v5M16.500 19.500h5" stroke="#fff" /></g>,
  eye: <g><path d="M1 12c5-8 16-8 21 0-5 7-16 7-21 0z" fill="#fff" stroke="#777" strokeWidth="1.200" /><circle cx="12" cy="11" r="4.500" fill="#6c9bd2" stroke="#345" /><circle cx="12" cy="11" r="1.800" fill="#123" /><path d="M16 20h7l-3.500 3.500z" fill="#444" /></g>,
  epsFilter: <g><text x="0" y="16" fontSize="22" fontFamily="DejaVu Sans, sans-serif" fill="#6d4380" stroke="#6d4380" strokeWidth=".6">ε</text><path d="M13 12h10v2l-2 2v7h-5v-7l-3-2z" fill="#ccc" stroke="#888" /></g>,
  remove: <g><path d="M2 3h17v16H2z" fill="none" stroke="#888" strokeWidth="1.600" /><rect x="14" y="15.500" width="9.500" height="7.500" rx="1.500" fill="#e55" /><path d="M16 19.300h5.500" stroke="#fff" strokeWidth="2" /></g>,
  chip: <Chip />,
  chipBlue: <Chip c="#7d9cba" />,
  funnelGray: <path d="M3 3h18v3l-7 7v8h-4v-8L3 6z" fill="#fff" stroke="#777" strokeWidth="2" />,
  poly: <Poly />,
  polySel: <Poly fill="#8fb8e0" stroke="#7da5cc" />,
  tableGray: <g><path d="M1.500 1.500h21v21h-21z" fill="#eee" stroke="#888" strokeWidth="1.500" /><path d="M2 6.500h20M7 2v20" stroke="#999" strokeWidth="1.500" /><path d="M4 4h2M9 4h11M3 10h3M9 10h4M16 10h4M3 14h3M9 14h4M16 14h4M3 18.500h3M9 18.500h4M16 18.500h4" stroke="#777" strokeWidth="1.800" /></g>,
  graduated: <g strokeWidth="1.400"><rect x="2" y="1" width="17" height="5.500" rx="1" fill="#fce000" stroke="#f0a000" /><rect x="5" y="9" width="18" height="5.500" rx="1" fill="#f85a14" stroke="#c42c00" /><rect x="2" y="17" width="18" height="5.500" rx="1" fill="#b80000" stroke="#700" /></g>,
  paint: <g><path d="M2 8l9-5 6 6-4 10-10-3z" fill="#9fd09c" /><path d="M2 8l5-3 3 6-5 3z" fill="#7db1dd" /><path d="M2 16l7-3 3 7-7-1z" fill="#e25c8c" /><path d="M9 11l6-5 5 6-4 7-6 2-3-3z" fill="#b5b1a6" stroke="#7d7a70" strokeWidth=".8" /><path d="M11 13l5 5M9 15l4 5" stroke="#8b877c" strokeWidth=".6" /><path d="M16 9l7-6" stroke="#908d82" strokeWidth="2.800" /></g>,
  cube: <g stroke="#b02020"><path d="M12 1l9.500 6L12 13 2.500 7z" fill="#f78d8d" strokeWidth="1.500" /><path d="M2.500 8L12 14v9l-9.500-6z" fill="#7fe02a" stroke="#3b8a10" /><path d="M21.500 8L12 14v9l9.500-6z" fill="#fce94f" stroke="#b08d00" /></g>,
  mask: <g strokeWidth="1"><path d="M8 6v11M16 6v11M4 11v6M20 11v6M5 11h3M16 11h4" stroke="#b87a1e" strokeWidth="3" fill="none" /><path d="M7.500 1h9.500v6H7.500z" fill="#e8585f" stroke="#b02a30" /><path d="M1.500 16h9v6.500h-9z" fill="#fce068" stroke="#b08d00" /><path d="M14 16h9v6.500h-9z" fill="#8db8ea" stroke="#4776ad" /></g>,
  history: <g><g transform="translate(1 1) scale(.6)"><Undo fill="#71ad7b" flip /></g><g transform="translate(8 8) scale(.65)"><Undo fill="#e58a4e" /></g></g>,
  undoC: <Undo fill="#e8834a" />,
  redoC: <Undo fill="#7fb988" flip />,
  check: <Check />,
  checkBox: <g><path d="M3 1h19v22H3z" fill="none" stroke="#555" strokeWidth="1.300" strokeDasharray="2 1.500" /><g transform="translate(7 6) scale(.75)"><Check /></g></g>,
  wrench: <g><path d="M10 10l12 12" stroke="#6b5a20" strokeWidth="5.500" /><path d="M11 11l10.500 10.500" stroke="#e5cb70" strokeWidth="3.500" /><path d="M2 4l4 4 3-1V3L6 1c5-1 8 3 6 7s-8 4-10-4z" fill="#ddd" stroke="#777" /></g>,
  search: <g fill="none" stroke="#888" strokeWidth="2.200"><circle cx="9.500" cy="9.500" r="7.500" /><path d="M15 15l8 8" /></g>,
  tracker: <g fill="none" stroke="#333" strokeWidth="1.600"><rect x="3" y="2" width="8" height="12" rx="4" transform="rotate(-25 7 8)" /><rect x="9" y="8" width="9" height="14" rx="4.500" transform="rotate(-25 13 15)" fill="#ccc" /><path d="M7 4l4 9M4 9l8-4M10 14l8-4M14 13l3 6M16 3l6-1M15 7l6-3" /></g>,
  lock: <g><path d="M6.500 12V7.500C6.500 0 17.500 0 17.500 7.500V12" fill="none" stroke="#888" strokeWidth="2.500" /><rect x="3.500" y="10" width="17" height="13" rx="2" fill="#555" /></g>,
  crs: <g><circle cx="12" cy="12" r="10.500" fill="#777" /><path d="M1 12h22M3 6.500h18M3 17.500h18M7.500 2.500c-3 7-3 12 0 19M16.500 2.500c3 7 3 12 0 19" stroke="#eee" strokeWidth="1.200" fill="none" /><path d="M12-1v26M-1 12h26" stroke="#777" strokeWidth="1.500" /></g>,
  bubble: <g><path d="M12 1c14 0 14 17 5 18.500L18 24l-6-4.200C-3 19.500-3 1 12 1z" fill="#555" /><path d="M5.500 10.500h2.500M10.500 10.500H13M15.500 10.500H18" stroke="#fff" strokeWidth="2.500" /></g>,
  logo: <g><path d="M12 2.500a9.500 9.500 0 1 0 0 19 9.500 9.500 0 0 0 0-19z" fill="none" stroke="#589632" strokeWidth="4.500" /><path d="M14 14l8 8.500" stroke="#93b023" strokeWidth="5.500" /><circle cx="12" cy="11" r="3.500" fill="#f0a14a" /><path d="M12.500 13v3.500l3-3z" fill="#ee7913" /></g>,
};
const Icon = ({ n, s, off }) => <Glyph $s={s} $off={off}>{ICONS[n]}</Glyph>;

/* ---------- shared controls ---------- */

const Caret = styled.span`
  flex: none;
  width: 0;
  height: 0;
  border: 4px solid transparent;
  border-bottom-width: 0;
  border-top: 4.5px solid ${p => p.$color || '#555'};
  margin: ${p => p.$m || 0};
  ${p => p.$dir === 'up' && css`transform: rotate(180deg);`}
  ${p => p.$dir === 'right' && css`transform: rotate(-90deg);`}
  opacity: ${p => (p.$off ? 0.5 : 1)};
`;
const CheckBoxFrame = styled.span`
  flex: none;
  width: 14px;
  height: 14px;
  margin-left: ${p => p.$ml || 0}px;
  background: #fff;
  border: 1px solid #bbb;
  display: grid;
  place-items: center;
`;
const CheckBox = ({ on, ml }) => (
  <CheckBoxFrame $ml={ml}>
    {on && <svg width="12" height="12" viewBox="0 0 12 12"><path d="M2 6.200l2.800 3.300L9.800 2" fill="none" stroke="#000" strokeWidth="2" /></svg>}
  </CheckBoxFrame>
);
const Field = styled.div`
  flex: none;
  display: flex;
  align-items: center;
  width: ${p => p.$w}px;
  height: ${p => p.$h || 24}px;
  margin-left: ${p => p.$ml || 0}px;
  padding-left: ${p => (p.$pl === undefined ? 4 : p.$pl)}px;
  background: ${p => (p.$flat ? '#fff' : 'linear-gradient(#fff, #f3f3f3)')};
  border: 1px solid #adadad;
  border-radius: 3px;
  ${p => p.$center && css`justify-content: center; padding: 0;`}
`;
const FieldEnd = styled.div`
  flex: none;
  width: ${p => p.$w || 16}px;
  height: 100%;
  margin-left: auto;
  border-left: 1px solid #bbb;
  background: linear-gradient(#fff, #f1f1f1);
  border-radius: 0 3px 3px 0;
  display: flex;
  flex-direction: column;
  align-items: center;
  justify-content: center;
  gap: 3px;
`;
const Spinner = () => <FieldEnd $w={14}><Caret $dir="up" /><Caret /></FieldEnd>;

const Grip = styled.span`
  flex: none;
  width: ${p => p.$w || 16}px;
  height: 19px;
  margin-left: ${p => p.$ml || 0}px;
  padding-left: ${p => (p.$pl === undefined ? 8 : p.$pl)}px;
  &::before {
    content: '';
    display: block;
    width: 6px;
    height: 100%;
    background-image: radial-gradient(circle, #b5b5b5 0.8px, transparent 1px);
    background-size: 3px 3px;
  }
`;
const Divider = styled.span`
  flex: none;
  width: 1px;
  height: 19px;
  margin: 0 3px;
  background: #cfcfcf;
`;

/* ---------- window chrome ---------- */

const Window = styled.div`
  position: relative;
  width: 1365px;
  height: 727px;
  display: flex;
  flex-direction: column;
  overflow: hidden;
  background: #efefef;
`;
const TitleBar = styled.header`
  height: 22px;
  display: flex;
  align-items: center;
  padding-bottom: 2px;
  background: #fff;
`;
const WindowButtons = styled.div`
  margin-left: auto;
  display: flex;
  align-items: center;
  gap: 34.5px;
  margin-right: 19px;
  margin-top: -3px;
`;
const MenuBar = styled.nav`
  height: 20px;
  display: flex;
  align-items: center;
  gap: 13.65px;
  padding: 0 0 2px 9px;
  border-bottom: 1px solid #d2d2d2;
`;
const ToolBar = styled.div`
  height: ${p => p.$h || 39}px;
  display: flex;
  align-items: center;
  background: linear-gradient(#fafafa, #ededed);
  border-bottom: 1px solid ${LINE};
`;
const ToolButton = styled.span`
  flex: none;
  width: ${p => (p.$menu ? 45 : 33)}px;
  height: 32px;
  display: flex;
  align-items: center;
  padding: 0 ${p => (p.$framed ? 3.5 : 4.5)}px;
  ${p => p.$framed && css`
    width: 32px;
    margin-right: 1px;
    border: 1px solid #adadad;
    border-radius: 3px;
    background: ${p.$framed === 'pressed' ? '#dedede' : '#fff'};
  `}
`;

const bar1 = ['newFile:raised', 'open', 'save', 'layout', 'layoutMgr', 'styleMgr', '|', 'pan', 'panSel', 'zoomIn:pressed', 'zoomOut', 'zoomFull', 'zoomSel', 'zoomLayer', 'zoomNative:off', 'zoomLast', 'zoomNext:off', 'newView', 'newMark', 'marks', 'refresh', '|', 'identify', 'action:offmenu', 'select:menu', 'selectVal:menu', 'deselect', 'table', 'abacus', 'gear', 'sigma', 'ruler:menu', 'tips', 'annot:menu'];
const bar2 = ['dsm', 'geopkg', 'newShp', 'newSpatialite', 'newMem', '/', 'newVirt', '|', 'edits:off', 'pencil', 'saveEdits:off', 'addPoly:off', 'vertex:offmenu', 'modify:off', 'trash:off', 'cut:off', 'copy:off', 'paste:off', 'undo:off', 'redo:off', '|', 'tag', 'diagram', '/', 'tagPin', 'tagRed', '/', 'tagPin2', 'tagEye', 'tagMove', 'tagRot', 'tagEdit', '|', '|', 'python', 'fire', 'leaf', 'earth', '|', 'help', '|', 'topo:pressed', 'sync'];
const bar3 = ['osmFind', 'osm', '|', '|', 'profile', '|', 'geocode'];

const Tools = ({ items }) => (
  <>
    <Grip $w={11.5} $pl={3} />
    {items.map((item, i) => {
      if (item === '|') return <Grip key={i} />;
      if (item === '/') return <Divider key={i} />;
      const [name, state = ''] = item.split(':');
      const off = state.includes('off');
      const menu = state.includes('menu');
      return (
        <ToolButton key={i} $menu={menu} $framed={/raised|pressed/.test(state) ? state : undefined}>
          <Icon n={name} off={off} s={name === 'tag' || name === 'tagRed' ? 23 : 24} />
          {menu && <Caret $m="0 0 0 5px" $off={off} />}
        </ToolButton>
      );
    })}
  </>
);

const menus = [['&Project', 37], ['&Edit', 21], ['&View', 26], ['&Layer', 28], ['&Settings', 42], ['&Plugins', 40], ['Vect&or', 33], ['&Raster', 32], ['&Database', 48], ['&Web', 25], ['&Mesh', 29], ['Pro&cessing', 57], ['&Help', 26]];

/* ---------- docks ---------- */

const Main = styled.div`
  height: 541px;
  display: flex;
`;
const SideBar = styled.div`
  width: 51px;
  flex: none;
  display: flex;
  flex-direction: column;
  border-right: 1px solid ${LINE};
  background: linear-gradient(90deg, #fafafa, #ededed);
`;
const SideGrip = styled.div`
  width: 17px;
  height: 6px;
  margin: 6px 0 1px 18px;
  background-image: radial-gradient(circle, #b5b5b5 0.8px, transparent 1px);
  background-size: 3px 3px;
`;
const SideItem = styled.div`
  height: 32px;
  display: flex;
  align-items: center;
  padding-left: 7px;
`;
const Dock = styled.section`
  flex: none;
  display: flex;
  flex-direction: column;
  width: ${p => p.$w}px;
  padding-left: ${p => p.$pl || 0}px;
`;
const DockTitle = styled.div`
  flex: none;
  height: ${p => p.$h || 22}px;
  display: flex;
  align-items: center;
  padding: 0 ${p => p.$pr || 0}px ${p => (p.$pb === undefined ? 2 : p.$pb)}px 4px;
`;
const DockButtons = styled.span`
  margin-left: auto;
  display: flex;
  gap: 3px;
`;
const DockHead = ({ title, w, h, pr, pb }) => (
  <DockTitle $h={h} $pr={pr} $pb={pb}>
    <T w={w}>{title}</T>
    <DockButtons>
      <svg width="11" height="11" viewBox="0 0 11 11" fill="none" stroke="#666"><rect x=".5" y=".5" width="10" height="10" rx="1.500" /><path d="M4.500 2.500h4v4h-4zM2.500 4.500h4v4h-4z" /></svg>
      <svg width="11" height="11" viewBox="0 0 11 11" fill="none" stroke="#555"><rect x=".5" y=".5" width="10" height="10" rx="1.500" /><path d="M3 3l5 5M8 3L3 8" strokeWidth="2" /></svg>
    </DockButtons>
  </DockTitle>
);
const DockTools = styled.div`
  flex: none;
  height: ${p => p.$h}px;
  display: flex;
  align-items: center;
  gap: 9px;
  padding: 0 0 ${p => p.$pb || 4}px 8px;
`;
const PressedTool = styled.span`
  width: 24px;
  height: 24px;
  margin: 0 -4px;
  display: grid;
  place-items: center;
  border: 1px solid #adadad;
  border-radius: 3px;
  background: #dedede;
`;
const TreeFrame = styled.div`
  flex: none;
  display: flex;
  width: 375px;
  height: ${p => p.$h}px;
  border: 1px solid ${LINE};
  background: #fff;
  overflow: hidden;
`;
const TreeRows = styled.div`
  flex: 1;
  min-width: 0;
`;
const TreeRow = styled.div`
  height: ${p => p.$h || 18}px;
  display: flex;
  align-items: center;
  background: ${p => (p.$selected ? '#0f7bda' : 'transparent')};
`;
const Twisty = styled.span`
  flex: none;
  width: ${p => p.$w || 23}px;
  padding-left: 6px;
  display: flex;
`;
const IconSlot = styled.span`
  flex: none;
  width: ${p => p.$w}px;
  display: flex;
  justify-content: center;
`;
const Swatch = styled.span`
  flex: none;
  width: ${p => p.$s || 16}px;
  height: ${p => p.$s || 16}px;
  background: ${p => p.$c};
  border: 1px solid rgba(35, 35, 35, 0.65);
`;
const Dot = styled.span`
  width: 8px;
  height: 8px;
  border-radius: 50%;
  background: ${p => p.$c};
  border: 1px solid rgba(35, 35, 35, 0.45);
`;
const Dash = styled.span`
  width: 16px;
  height: 1px;
  background: ${p => p.$c};
`;
const Indicator = styled.span`
  margin-left: auto;
  flex: none;
  width: ${p => (p.$icon ? 20 : 4)}px;
  height: 16px;
  padding-right: 1px;
  border-right: 3px solid #dfdfdf;
  display: flex;
  align-items: center;
  justify-content: center;
  margin-right: 1px;
  ${p => p.$icon && css`background: linear-gradient(90deg, #efefef 16px, transparent 16px);`}
`;
const ScrollTrack = styled.div`
  flex: none;
  width: ${p => p.$w || 15}px;
  display: flex;
  flex-direction: column;
  background: #e6e6e6;
  border-left: 1px solid ${LINE};
`;
const ScrollEnd = styled.span`
  height: 14px;
  flex: none;
  display: grid;
  place-items: center;
  background: #fafafa;
  border: solid ${LINE};
  border-width: ${p => (p.$last ? '1px 0 0' : '0 0 1px')};
  ${p => p.$last && css`margin-top: auto;`}
`;
const Thumb = styled.span`
  height: ${p => p.$h}px;
  background: linear-gradient(90deg, #fff, #f0f0f0);
  border-bottom: 1px solid ${LINE};
`;
const ScrollBar = ({ thumb, w }) => (
  <ScrollTrack $w={w}>
    <ScrollEnd><Caret $dir="up" /></ScrollEnd>
    <Thumb $h={thumb} />
    <ScrollEnd $last><Caret /></ScrollEnd>
  </ScrollTrack>
);
const DotsRow = styled.span`
  flex: none;
  width: 17px;
  height: 3px;
  margin: ${p => p.$m};
  background-image: radial-gradient(circle, #b5b5b5 0.8px, transparent 1px);
  background-size: 3px 3px;
`;

const sideTools = [['addVector'], ['addRaster'], ['addMesh'], ['addCsv'], ['addSpatialite'], ['addVirt'], ['addPg', 1], ['addWms', 1], ['addWcs'], ['addWfs', 1], ['addGpkg', 1]];

const browserItems = [
  { icon: 'star', text: 'Favorites', w: 48 },
  { icon: 'bookmark', text: 'Spatial Bookmarks', w: 98, open: true },
  { icon: 'home', text: 'Home', w: 34, open: true },
  { icon: 'geobox', text: 'GeoPackage', w: 66, open: true },
];

const layers = [
  { text: 'Clipped', w: 43, fill: '#b2e5b2', tail: 'chip' },
  { text: 'builtup_spaces_gridded', w: 128, table: true },
  { text: 'schools_cleaned', w: 90, dot: '#e0263c' },
  { text: 'pofw', w: 29, dot: '#4a1c9c' },
  { text: 'waterways', w: 61, dash: '#e3b34a', on: true, shown: true },
  { text: 'green_spaces_gridded', w: 121, fill: '#f3a6b2' },
  { text: 'green_spaces_gridded', w: 122, table: true },
  { text: 'builtup_spaces_gridded', w: 130, fill: '#d2b23c' },
  { text: 'Intersection', w: 67, poly: 'poly', twist: 'right', tail: 'chip' },
  { text: 'landuse', w: 43, poly: 'poly', twist: 'right', tail: 'funnelGray' },
  { text: 'roads', w: 31, dash: '#e4e4e4' },
  { text: 'Line length', w: 62, poly: 'poly', twist: 'down', tail: 'chip' },
  { cls: '#ffbfbf', text: '0 - 14669', w: 47, h: 20 },
  { cls: '#ff8080', text: '14669 - 72303', w: 71, h: 20 },
  { cls: '#ff4040', text: '72303 - 353215', w: 77, h: 20 },
  { cls: '#ff0000', text: '353215 - 1312431', w: 89, h: 20 },
  { text: 'Line length', w: 62, poly: 'polySel', twist: 'down', tail: 'chipBlue', on: true, shown: true, selected: true },
  { cls: '#72b0d7', text: '0 - 257', w: 35 },
  { cls: '#2a7ab9', text: '257 - 11199', w: 59 },
  { cls: '#08306b', text: '11199 - 107026', w: 77 },
];

function LayerRow({ l }) {
  if (l.cls) {
    return (
      <TreeRow $h={l.h}>
        <CheckBox on ml={43} />
        <IconSlot $w={30}><Swatch $s={18} $c={l.cls} /></IconSlot>
        <T w={l.w} $mt={-1}>{l.text}</T>
      </TreeRow>
    );
  }
  const color = l.selected ? '#fff' : l.table || l.shown ? '#000' : '#777';
  return (
    <TreeRow $selected={l.selected}>
      <Twisty>{l.twist && <Caret $dir={l.twist} $color={l.selected ? '#134' : undefined} />}</Twisty>
      {l.table
        ? <IconSlot $w={16}><Icon n="tableGray" s={15} /></IconSlot>
        : <><CheckBox on={l.on} />
          <IconSlot $w={28}>
            {l.fill && <Swatch $c={l.fill} />}
            {l.dot && <Dot $c={l.dot} />}
            {l.dash && <Dash $c={l.dash} />}
            {l.poly && <Icon n={l.poly} s={16} />}
          </IconSlot></>}
      <T w={l.w} $bold $italic={!l.table && !l.shown} $underline={l.selected} $color={color} $ml={l.table ? 6 : 0} $mt={-1}>{l.text}</T>
      <Indicator $icon={l.tail}>{l.tail && <Icon n={l.tail} s={14} />}</Indicator>
    </TreeRow>
  );
}

/* ---------- map ---------- */

const Canvas = styled.div`
  flex: none;
  width: 471px;
  height: 540px;
  margin: 1px 0 0 6px;
  background: #fff;
  border: 1px solid ${LINE};
`;

const gridRows = [
  'aaaaabcccaabbbbbaaa',
  'aaaaaccccaaaaaabbaa',
  'baaaccccccbbabbaaaa',
  'aaaaabccbaaaaaaaaaa',
];
const classColor = { a: '#72b0d7', b: '#2a7ab9', c: '#08306b' };
const COL = 23.53;
const ROW = 23.55;

/* River network west of the centre, drawn at three units per pixel. */
const rivers = [
  'M455 48l5-8M447 62l2 8-3 25 14-1 24 1 14-20 5-14-4-14-12-6M483 55l2 22M516 48l6 20-8 8 10-10 8-6M520 60l8 10-10-2M602 50l2 6',
  'M425 108l-14 14 2 16 14 30 8-6 22-14M410 120l10 18M418 160l8 12 10-12M453 150l4-6M466 112l6 4M478 108v18l4 36 2 30 6 18 12 22M482 134l2 26M405 168l8-4',
  'M512 70l4 18-6 12 6 12-4 14 4 22-2 18-14 14-14 12M502 96l6 20-6 10 8 14-6 12 10 6M510 100l4 24-6-2 4 18M518 108l-8 40M500 112l14 12-12 8 14 12M520 96l2 24M505 118l8 22M498 150l20 4-6 14M520 170l10-6M478 172l12 12-14 8M526 150l6 18-10 6M508 112l6 26 3-20-6 4',
  'M552 92l4 14 8 12 12 6M548 78l8 4M560 86l6 16-8 8 14 12-16 6 20 4-18 8 16 10-22 4 14 10-10 12M548 102l8 22 4 12-6 20 14 8M574 84l4 18 10-6 8 10-6 14M582 88l12 10 14-6 6 12-18 12M590 80l14 14-10 16M598 76l6 18 14-8 8 18-12 14M606 86l14 16 12-10 8 14M632 76l6 16-4 14M566 112l16-6 6 14 14-16 10 4M552 120l20 8M550 128l24-4-8 16-20-2M556 140l16 6-20 6M570 136l-8 24M584 100l24-4M588 104l20-2M608 84l4 30M584 132l8-16 10-4M644 100l4-6M652 92l8 4M580 110l-10 20M588 92l4 20 8-14 4 16M562 104l8 14-8 6 10 6',
  'M328 206l-2 10 34 4 30 8 26 4 28 4 56-2 36 4 20-8M332 218l36 4 20-4 28 10M352 214l34-4 20 10 34 18 8 16 34-4 30 2 34-8M362 200l22 8 14-2M366 196l20 4 10 8M370 206l24-6M364 208l26-6M374 214l24-4M378 196l4 20M366 212l34 2M384 206l20 0M360 204l10 14M388 196l8 20M440 238l20-4 48 0 30-6M444 240l12 14M436 218l16-2M440 224l12-6M440 218l10 8M334 184l4 2M466 204l4 4M452 208l14 4-8 6',
  'M510 178l4 18-6 10 8 12 10 10 26 4 12 10M520 172l10 12-8 14-14 8 20 12 14-10 12-10M540 176l4 16 8 14 2 16-12 18M532 170l12 16-4 16 14 14-22 4 20 8-14 12M512 190l18-6 14 14M536 192l16-6-4 20M506 212l30 4 18 8M504 220l44-6M508 226l44 4M512 234l40 4M522 208l6 18-4 12M538 210l4 24M492 198l16-14M500 208l10 14 16-4M486 224l28 2 20 4M544 196l-14 18',
  'M556 180l4 10 6-2 2-10-8-4-2 12 8 2M558 178l8 14 0-14-6 14M448 250l30 4 36-2 40-4 20-6M450 254h64M520 248l-4 8 28-2M556 226l8 20 8-14 6 14 8-18 4 16 8-14 6 10 10-6 14 0-2 10-10-4 0 8M572 228l20 10-26 4 30-6 12-10M570 234h30M576 240l20-8M560 242l10 18 6-14M588 222l10 18M600 220l-4 20M606 214l4 24M614 220l2 18M626 218l-6 22M634 214l-4 24 14-8M640 220l4 20 8-14M648 232l12-6M576 228l-6 18 20-4-12-12 18 8M584 234l4 10 10-8',
  'M568 236l36-6M574 230l22 14M580 242l14-14M602 236l20-10 8 10 20-4M608 226l10 10M592 216l12 16 8-16 10 16 8-14',
  'M656 240l20-8 14-6M660 228l10-6M664 222l14 14 10-6M676 220l4 12M688 214l-6 14 12 4M694 222l14 4 10-4M698 236l18-2M702 228l14 2M706 216l8 8M716 200l6-2M724 172l6 2-2 6',
  'M24 226l6 10-4 2M30 228v10',
];
/* East part of the network. */
const eastRivers = [
  'M160 44l14-2 6 8-2 12 12 4 4 14 8 14M268 44l4 8-4 22 2 12 8 8M422 46v18l-8 12-16 4-4 12-6 4 4 10M398 118l6 10-6 14M462 158l38-4 8-10 10-6 6-8M104 206l2 10M68 226l8-2 4 8v8M148 224v4M272 184l2 14 6 12-6 8M352 200l-10-2-2 20-4 12 6 4M344 214v18M362 208l4 4-4 4 0-8 6 4M0 236l32-2M0 230l28-4M30 200l8-4M0 220l12-2',
];

const MapDrawing = () => (
  <svg width="469" height="538" viewBox="433 160 469 538" style={{ display: 'block' }}>
    {gridRows.map((row, r) => [...row].map((c, i) => (
      <rect key={`${r}-${i}`} x={444 + i * COL} y={382 + r * ROW} width={COL} height={ROW} fill={classColor[c]} />
    )))}
    <g stroke="#232323" strokeOpacity=".85" strokeWidth="1.200" fill="none">
      {Array.from({ length: 20 }, (_, i) => <path key={i} d={`M${444 + i * COL} 381.500V476.500`} />)}
      {Array.from({ length: 5 }, (_, i) => <path key={i} d={`M443.500 ${382 + i * ROW}H891.500`} />)}
    </g>
    <g fill="none" stroke="#e3b331" strokeWidth="3.500" opacity=".92">
      <g transform="translate(436 372) scale(.33333)">{rivers.map((d, i) => <path key={i} d={d} />)}</g>
      <g transform="translate(665 372) scale(.33333)">{eastRivers.map((d, i) => <path key={i} d={d} />)}</g>
    </g>
  </svg>
);

/* ---------- right docks ---------- */

const StyleBody = styled.div`
  display: flex;
  height: 304px;
  margin: 6px 3px 0;
`;
const StyleTabs = styled.div`
  width: 38px;
  flex: none;
  display: flex;
  flex-direction: column;
  background: #5c5c5c;
  overflow: hidden;
`;
const StyleTab = styled.span`
  height: 32px;
  flex: none;
  display: flex;
  align-items: center;
  padding-left: ${p => (p.$active ? 6 : 4)}px;
  background: ${p => (p.$active ? '#efefef' : 'transparent')};
`;
const StyleContent = styled.div`
  width: 409px;
  margin-left: 3px;
`;
const ScrollArea = styled.div`
  display: flex;
  height: 274px;
  overflow: hidden;
`;
const Form = styled.div`
  width: 395px;
  flex: none;
  display: flex;
  flex-direction: column;
  overflow: hidden;
`;
const FormRow = styled.div`
  flex: none;
  display: flex;
  align-items: center;
  height: ${p => p.$h}px;
  margin-top: ${p => p.$mt || 0}px;
`;
const FormLabel = styled.span`
  width: 76px;
  flex: none;
  padding-top: 1px;
`;
const Fill = styled.span`
  flex: none;
  width: 298px;
  height: ${p => p.$h}px;
  background: ${p => p.$bg};
  border: ${p => (p.$border ? '1px solid #7a6a2a' : 0)};
`;
const TabStrip = styled.div`
  flex: none;
  display: flex;
  align-items: ${p => (p.$below ? 'flex-start' : 'flex-end')};
  height: ${p => p.$h}px;
  margin-top: ${p => p.$mt}px;
  border: 0 solid ${LINE};
  border-width: ${p => (p.$below ? '1px 0 0' : '0 0 1px')};
`;
const Tab = styled.span`
  width: ${p => p.$w}px;
  height: ${p => p.$h}px;
  display: flex;
  align-items: center;
  justify-content: center;
  padding-right: 1px;
  border: 1px solid ${LINE};
  background: ${p => (p.$active ? '#fafafa' : p.$below ? '#dcdcdc' : '#e4e4e4')};
  ${p => (p.$below
    ? css`border-top: 0; border-radius: 0 0 3px 3px; margin-top: ${p.$active ? -1 : 0}px; padding-top: ${p.$active ? 2 : 1}px;`
    : css`border-bottom: 0; border-radius: 3px 3px 0 0; margin-bottom: ${p.$active ? -1 : 0}px;`)}
  & + & { border-left: 0; }
`;
const ClassTable = styled.div`
  flex: 1;
  margin-top: 10px;
  border: 1px solid ${LINE};
  border-bottom: 0;
  background: #fff;
`;
const HeaderRow = styled.div`
  display: flex;
  height: 19px;
  background: linear-gradient(#fff, #ededed);
  border-bottom: 1px solid ${LINE};
`;
const HeaderCell = styled.span`
  width: ${p => (p.$w ? `${p.$w}px` : 'auto')};
  flex: ${p => (p.$w ? 'none' : 1)};
  display: flex;
  align-items: center;
  justify-content: ${p => (p.$center ? 'center' : 'flex-start')};
  padding-left: ${p => (p.$center ? 0 : 2)}px;
  border-right: 1px solid #ccc;
  &:last-child { border-right: 0; }
`;
const ClassRow = styled.div`
  display: flex;
  align-items: center;
  height: 18px;
`;
const Cell = styled.span`
  width: ${p => p.$w}px;
  flex: none;
  display: flex;
  align-items: center;
  gap: 6px;
  padding-left: ${p => p.$pl || 0}px;
`;
const ButtonRow = styled.div`
  display: flex;
  align-items: center;
  height: 24px;
  margin-top: 5px;
`;
const ErrorTable = styled.div`
  flex: none;
  height: 70px;
  background: #fff;
  border: 1px solid ${LINE};
`;
const ErrorFooter = styled.div`
  display: flex;
  align-items: center;
  height: 24px;
  margin-top: 4px;
`;
const StatusBar = styled.footer`
  flex: 1;
  display: flex;
  align-items: center;
  padding-left: 3px;
`;
const Spacer = styled.span`
  flex: none;
  width: ${p => p.$w}px;
`;
const Watermark = styled.div`
  position: absolute;
  left: 1072px;
  top: 650px;
  color: rgba(150, 150, 150, 0.75);
  line-height: 23px;
  pointer-events: none;
`;
const SplitGrip = styled.span`
  width: 6px;
  height: 18px;
  flex: none;
  align-self: center;
  background-image: radial-gradient(circle, #b5b5b5 0.8px, transparent 1px);
  background-size: 3px 3px;
`;

const classes = [
  ['#72b0d7', '0.00 - 257.43', 65, '0 - 257', 36],
  ['#2a7ab9', '257.43 - 11198.75', 89, '257 - 11199', 59],
  ['#08306b', '11198.75 - 107025.96', 107, '11199 - 107026', 77],
];
const RAMP = 'linear-gradient(90deg, #f7fbff, #deebf7 13%, #c6dbef 26%, #9ecae1 39%, #6baed6 52%, #4292c6 65%, #2171b5 78%, #08519c 90%, #08306b)';

function BrowserDock() {
  return (
    <>
      <DockHead title="Browser" w={42} pr={2} />
      <DockTools $h={29}>
        {['addLayer', 'refresh', 'funnel', 'collapse', 'info'].map(n => <Icon key={n} n={n} s={16} />)}
      </DockTools>
      <TreeFrame $h={70}>
        <TreeRows>
          {browserItems.map(b => (
            <TreeRow key={b.text}>
              <Twisty>{b.open && <Caret $dir="right" />}</Twisty>
              <Icon n={b.icon} s={16} />
              <T w={b.w} $ml={6}>{b.text}</T>
            </TreeRow>
          ))}
        </TreeRows>
        <ScrollBar thumb={27} w={14} />
      </TreeFrame>
      <DotsRow $m="1px 0 0 180px" />
    </>
  );
}

function LayersDock() {
  return (
    <>
      <DockHead title="Layers" w={34} pr={2} h={24} />
      <DockTools $h={28}>
        <PressedTool><Icon n="brush" s={16} /></PressedTool>
        {['group', 'eye', 'funnel', 'epsFilter'].map(n => <Icon key={n} n={n} s={16} />)}
        <Caret $m="0 0 0 -4px" />
        {['expand', 'collapse', 'remove'].map(n => <Icon key={n} n={n} s={16} />)}
      </DockTools>
      <TreeFrame $h={364}>
        <TreeRows>{layers.map((l, i) => <LayerRow key={i} l={l} />)}</TreeRows>
        <ScrollBar thumb={287} w={14} />
      </TreeFrame>
    </>
  );
}

function StylingDock() {
  return (
    <>
      <DockHead title="Layer Styling" w={67} pr={2} />
      <Field $w={450} $ml={3} $h={25}>
        <Icon n="poly" s={17} />
        <T w={53} $ml={1}>Line length</T>
        <Caret $m="0 7px 0 auto" />
      </Field>
      <StyleBody>
        <StyleTabs>
          <StyleTab $active><Icon n="paint" /></StyleTab>
          <StyleTab><Icon n="tagMid" s={22} /></StyleTab>
          <StyleTab><Icon n="cube" s={22} /></StyleTab>
          <StyleTab><Icon n="mask" s={22} /></StyleTab>
          <StyleTab><Icon n="history" s={22} /></StyleTab>
        </StyleTabs>
        <StyleContent>
          <ScrollArea>
            <Form>
              <FormRow $h={24} $mt={-5}>
                <Field $w={395} $pl={7}>
                  <Icon n="graduated" s={14} />
                  <T w={51} $ml={2} $mt={1}>Graduated</T>
                  <Caret $m="2px 7px 0 auto" />
                </Field>
              </FormRow>
              <FormRow $h={24} $mt={6}>
                <FormLabel><T w={25}>Value</T></FormLabel>
                <Field $w={289} $flat $pl={3}>
                  <T w={15} $bold $size={10} $color="#555" $mt={-1}>1.2</T>
                  <T w={58} $ml={4} $mt={1}>waterwaysL</T>
                  <FieldEnd $w={20}><Caret /></FieldEnd>
                </Field>
                <Field $w={24} $ml={6} $center><Icon n="eps" s={14} /></Field>
              </FormRow>
              <FormRow $h={27} $mt={6}>
                <FormLabel><T w={34}>Symbol</T></FormLabel>
                <Field $w={307} $h={27}><Fill $h={21} $bg="#d2b23c" $border /></Field>
                <Field $w={12} $h={27} $center><Caret /></Field>
              </FormRow>
              <FormRow $h={22} $mt={6}>
                <FormLabel><T w={70}>Legend format</T></FormLabel>
                <Field $w={178} $h={22} $flat $pl={2}><T w={44} $mt={1}>%1 - %2</T></Field>
                <Field $w={84} $h={20} $ml={6} $flat $pl={3}><T w={51} $mt={1}>Precision 0</T><Spinner /></Field>
                <CheckBox on ml={6} />
                <T w={21} $ml={4}>Trim</T>
              </FormRow>
              <FormRow $h={22} $mt={6}>
                <FormLabel><T w={52}>Color ramp</T></FormLabel>
                <Field $w={307} $h={22}><Fill $h={16} $bg={RAMP} /></Field>
                <Field $w={12} $h={22} $center><Caret /></Field>
              </FormRow>
              <TabStrip $h={25} $mt={5}>
                <Tab $w={61} $h={24} $active><T w={37}>Classes</T></Tab>
                <Tab $w={71} $h={22}><T w={49}>Histogram</T></Tab>
              </TabStrip>
              <ClassTable>
                <HeaderRow>
                  <HeaderCell $w={66}><T w={40} $mt={1}>Symbol</T><Caret $m="-3px 0 0 11px" /></HeaderCell>
                  <HeaderCell $w={113}><T w={33} $mt={1}>Values</T></HeaderCell>
                  <HeaderCell><T w={39} $mt={1}>Legend</T></HeaderCell>
                </HeaderRow>
                {classes.map(([c, v, vw, l, lw]) => (
                  <ClassRow key={v}>
                    <Cell $w={69} $pl={3}><CheckBox on /><Swatch $c={c} /></Cell>
                    <Cell $w={113}><T w={vw} $mt={-3}>{v}</T></Cell>
                    <T w={lw} $mt={-3}>{l}</T>
                  </ClassRow>
                ))}
              </ClassTable>
            </Form>
            <ScrollBar thumb={148} w={14} />
          </ScrollArea>
          <ButtonRow>
            <Field $w={24} $h={23} $center><Icon n="undoC" s={14} /></Field>
            <Field $w={24} $h={23} $ml={6} $center><Icon n="redoC" s={14} /></Field>
            <CheckBox on ml={188} />
            <T w={56} $ml={4} $mt={1}>Live update</T>
            <Field $w={80} $h={21} $ml={13} $center><T w={27} $mt={1}>Apply</T></Field>
          </ButtonRow>
        </StyleContent>
      </StyleBody>
      <TabStrip $below $h={24} $mt={3}>
        <Tab $below $active $w={87} $h={23}><T w={63}>Layer Styling</T></Tab>
        <Tab $below $w={115} $h={21}><T w={93}>Processing Toolbox</T></Tab>
      </TabStrip>
      <DotsRow $m="1px 0 0 220px" />
    </>
  );
}

function TopologyDock() {
  return (
    <>
      <DockHead title="Topology Checker Panel" w={127} pr={2} h={24} pb={0} />
      <DockTools $h={35} $pb={9}>
        {['check', 'checkBox', 'wrench'].map(n => <Icon key={n} n={n} s={16} />)}
      </DockTools>
      <ErrorTable>
        <HeaderRow>
          <HeaderCell $w={110} $center><T w={26}>Error</T></HeaderCell>
          <HeaderCell $w={56} $center><T w={28}>Layer</T></HeaderCell>
          <HeaderCell $center><T w={53}>Feature ID</T></HeaderCell>
        </HeaderRow>
      </ErrorTable>
      <ErrorFooter>
        <CheckBox />
        <T w={58} $ml={4} $mt={1}>Show errors</T>
        <T w={104} $ml={154} $mt={1}>No errors were found</T>
      </ErrorFooter>
    </>
  );
}

ICONS.eps = <text x="3" y="20" fontSize="28" fontFamily="DejaVu Sans, sans-serif" fill="#6d4380" stroke="#6d4380" strokeWidth=".5">ε</text>;

export default function App() {
  return (
    <Window>
      <Global />
      <TitleBar>
        <Spacer $w={1} />
        <Icon n="logo" s={16} />
        <T w={125} $ml={5}>*Untitled Project - QGIS</T>
        <WindowButtons>
          <svg width="11" height="11" viewBox="0 0 11 11"><path d="M0 6.500h11" stroke="#000" /></svg>
          <svg width="11" height="11" viewBox="0 0 11 11" fill="none" stroke="#000"><path d="M.5 2.500h8v8h-8zM2.500 2.500v-2h8v8h-2" /></svg>
          <svg width="11" height="11" viewBox="0 0 11 11" stroke="#000"><path d="M.5.500l10 10M10.500.500l-10 10" /></svg>
        </WindowButtons>
      </TitleBar>
      <MenuBar>{menus.map(([m, w]) => <T key={m} w={w}>{m}</T>)}</MenuBar>
      <ToolBar><Tools items={bar1} /></ToolBar>
      <ToolBar><Tools items={bar2} /></ToolBar>
      <ToolBar $h={38}>
        <Tools items={bar3} />
        <Field $w={80} $h={22} $ml={2}><T w={31} $mt={1}>Ghana</T><Caret $m="0 6px 0 auto" /></Field>
        <Field $w={768} $h={22} $ml={2} $flat $pl={1}><T w={62} $color="#777" $mt={1}>Search for...</T></Field>
      </ToolBar>
      <Main>
        <SideBar>
          <SideGrip />
          {sideTools.map(([n, menu]) => (
            <SideItem key={n}><Icon n={n} />{menu && <Caret $m="0 0 0 6px" />}</SideItem>
          ))}
        </SideBar>
        <Dock $w={375}>
          <BrowserDock />
          <LayersDock />
        </Dock>
        <Canvas><MapDrawing /></Canvas>
        <SplitGrip />
        <Dock $w={456}>
          <StylingDock />
          <TopologyDock />
        </Dock>
      </Main>
      <StatusBar>
        <Field $w={200} $h={22} $flat $pl={8}><Icon n="search" s={12} /><T w={112} $ml={7} $mt={1} $color="#777">Type to locate (Ctrl+K)</T></Field>
        <T w={216} $ml={7} $mt={1}>Toggles the editing state of the current layer</T>
        <T w={53} $ml={139} $mt={1}>Coordinate</T>
        <Field $w={92} $h={21} $ml={4} $flat $pl={6}><T w={75} $mt={1}>149708,165690</T></Field>
        <Spacer $w={4} /><Icon n="tracker" s={16} />
        <T w={25} $ml={12} $mt={1}>Scale</T>
        <Field $w={81} $h={21} $ml={4} $flat $pl={3}><T w={52} $mt={1}>1:1607709</T><FieldEnd $w={20}><Caret /></FieldEnd></Field>
        <Spacer $w={10} /><Icon n="lock" s={15} />
        <T w={44} $ml={7} $mt={1}>Magnifier</T>
        <Field $w={87} $h={21} $ml={4} $flat><T w={29} $mt={1}>100%</T><Spinner /></Field>
        <T w={42} $ml={9} $mt={1}>Rotation</T>
        <Field $w={84} $h={21} $ml={9} $flat $pl={3}><T w={25} $mt={1}>0.0 °</T><Spinner /></Field>
        <CheckBox on ml={6} />
        <T w={35} $ml={4} $mt={1}>Render</T>
        <Spacer $w={19} /><Icon n="crs" s={14} />
        <T w={60} $ml={4} $mt={1}>EPSG:26391</T>
        <Spacer $w={19} /><Icon n="bubble" s={16} />
      </StatusBar>
      <Watermark>
        <T w={157} $size={19}>Activate Windows</T>
        <T w={236} $size={13.5}>Go to Settings to activate Windows.</T>
      </Watermark>
    </Window>
  );
}
